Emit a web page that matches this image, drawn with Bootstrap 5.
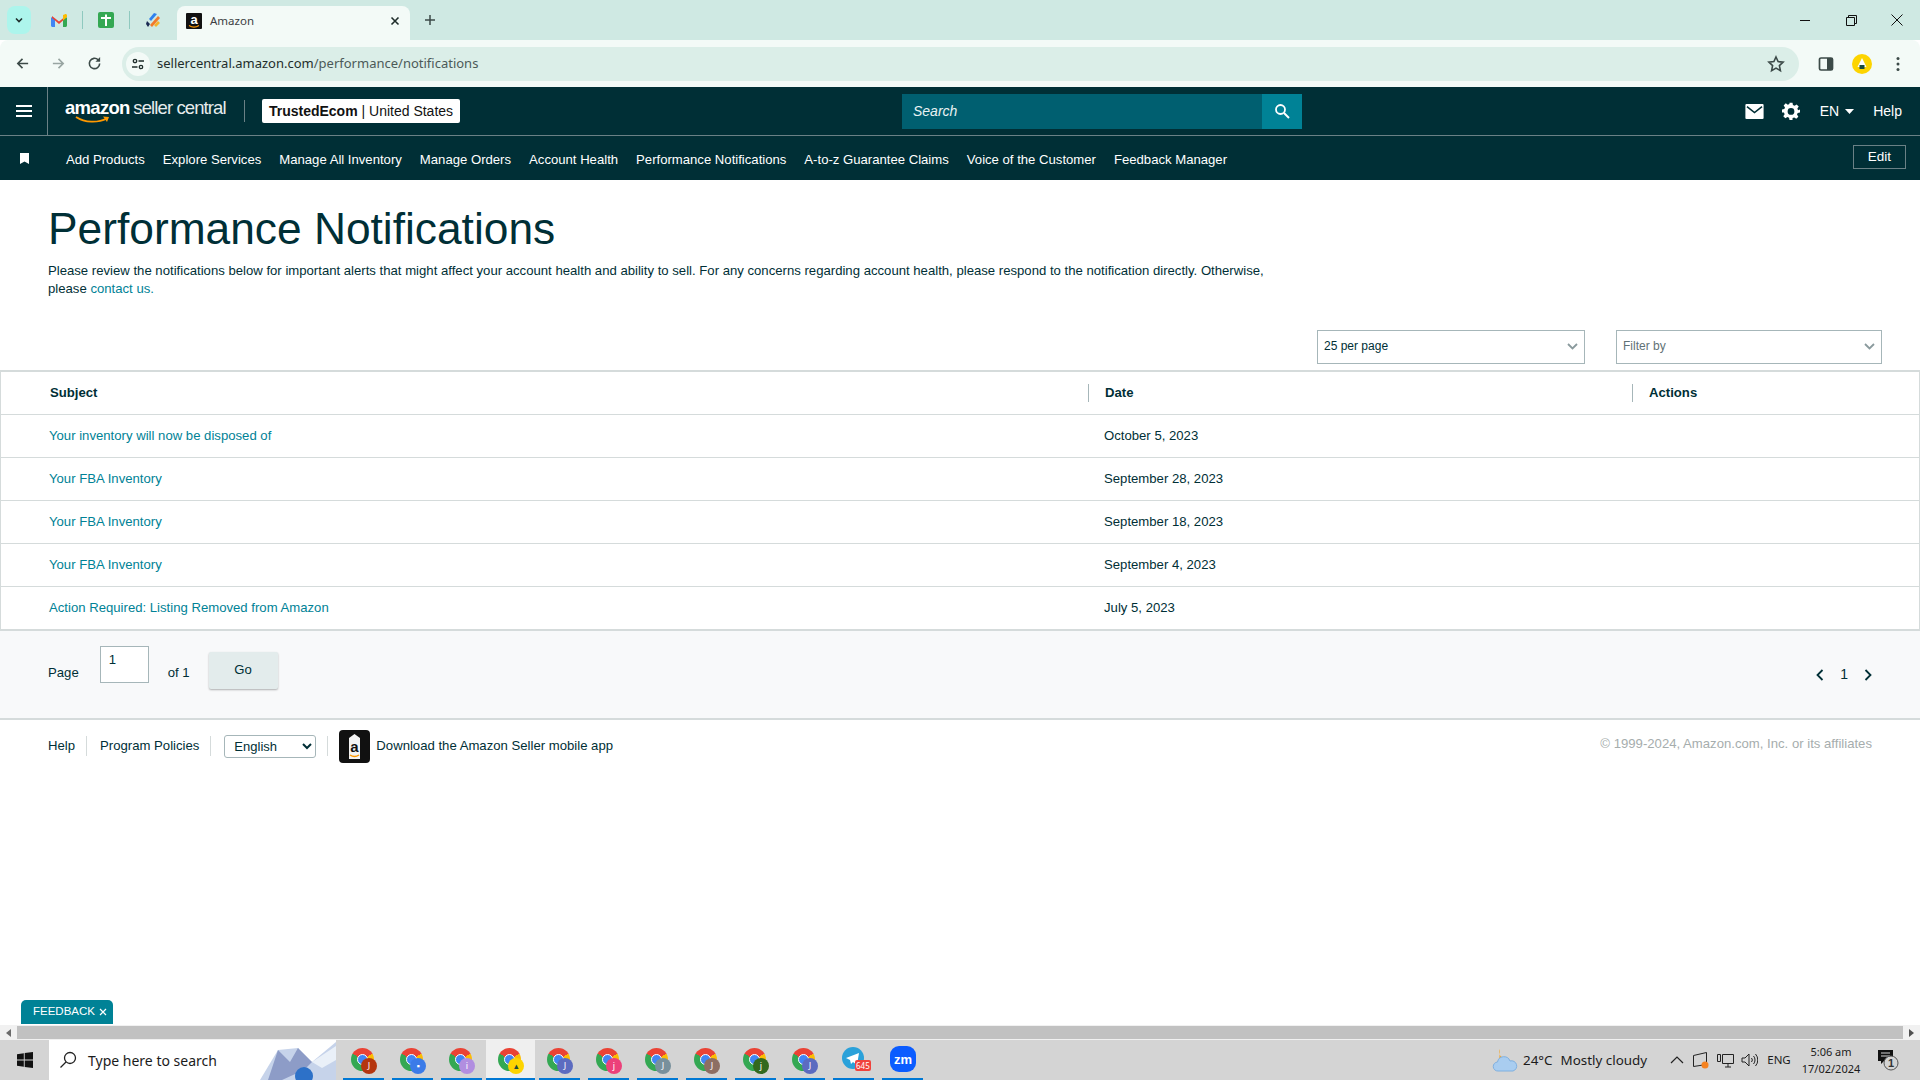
<!DOCTYPE html>
<html lang="en">
<head>
    <meta charset="UTF-8">
    <meta name="viewport" content="width=device-width, initial-scale=1.0">
    <title>Amazon</title>
    <link href="https://cdn.jsdelivr.net/npm/bootstrap@5.3.0/dist/css/bootstrap.min.css" rel="stylesheet">
    <style>
        :root {
            --ink: #002f36;
            --teal: #008296;
            --rule: #d5dbdb;
        }
        html, body { height: 100%; overflow: hidden; }
        body {
            width: 1920px;
            height: 1080px;
            font-family: "Liberation Sans", Arial, sans-serif;
            font-size: 13.15px;
            color: var(--ink);
            background: #fff;
        }
        .ui-font { font-family: "Noto Sans", "Open Sans", sans-serif; }

        /* browser chrome */
        .tab-strip { height: 40px; background: #cfe9e3; }
        .tab-search { width: 24px; height: 28px; margin: 6px 5px 0 7px; background: #adf5ec; border-radius: 8px; }
        .pinned { width: 46px; height: 40px; }
        .pin-sep { width: 1px; height: 18px; background: #8fc9bf; }
        .tab-active { width: 233px; height: 34px; margin: 6px 0 0 1px; padding: 0 10px 4px 9px; background: #f3faf7; border-radius: 8px 8px 0 0; font-size: 11.5px; color: #3c4043; }
        .tab-new { width: 40px; height: 40px; }
        .win-btn { width: 46px; height: 40px; }
        .toolbar { height: 47px; background: #f3faf7; border-radius: 8px 8px 0 0; }
        .nav-btn { width: 36px; }
        .omni { width: 1677px; height: 34px; margin-left: 10px; background: #dbeee8; border-radius: 17px; font-size: 13px; color: #1f2d2b; }
        .site-ico { width: 24px; height: 24px; margin: 0 7px 0 4px; border-radius: 50%; background: #f3faf7; }
        .url-dim { color: #4c5a58; }
        .star-ico { margin-right: 14px; }
        .tool-ico { width: 36px; }
        .tool-first { margin-left: 9px; }

        /* seller central header */
        .sc-top { height: 49px; background: var(--ink); border-bottom: 1px solid #6a8186; color: #fff; }
        .burger { width: 48px; height: 48px; border-right: 1px solid #6a8186; }
        .logo-wrap { width: 196px; padding-left: 17px; }
        .logo-amz { font-size: 18.5px; font-weight: 700; letter-spacing: -0.7px; line-height: 20px; }
        .logo-sc { font-size: 18.5px; font-weight: 400; letter-spacing: -0.9px; line-height: 20px; color: #e6ecec; }
        .logo-smile { margin-left: 10px; margin-top: -4px; }
        .v-rule { width: 1px; height: 22px; background: #6a8186; }
        .acct-box { height: 24px; width: 198px; margin-left: 17px; background: #fff; color: #111; border-radius: 2px; font-size: 14px; }
        .search-box { width: 400px; height: 35px; margin-left: 442px; }
        .search-input { flex: 1; background: #005f70; color: #e9f2f3; font-style: italic; font-size: 14px; padding-left: 11px; }
        .search-btn { width: 40px; background: var(--teal); }
        .sc-right { margin-left: auto; padding-right: 18px; font-size: 14px; }
        .sc-sub { height: 44px; background: var(--ink); color: #fff; padding: 0 14px 0 0; }
        .mark-ico { width: 48px; }
        .sc-links { gap: 18px; margin-left: 18px; padding-top: 3px; font-size: 13.14px; }
        .sc-links a { color: #fff; text-decoration: none; white-space: nowrap; }
        .edit-btn { margin-left: auto; margin-top: -3px; width: 53px; height: 24px; padding: 0; border: 1px solid #6a8186; border-radius: 0; color: #fff; font-size: 13.5px; background: transparent; line-height: 20px; }
        .gap-mail { margin: 0 18px; }
        .gap-caret { margin: 0 19px 0 6px; }
        .en-label { margin-left: 2px; }

        /* content */
        .page-title { font-size: 44.3px; font-weight: 400; line-height: 52px; margin: 23px 0 0 48px; color: var(--ink); }
        .page-intro { width: 1240px; margin: 7px 0 0 48px; line-height: 18px; color: var(--ink); }
        .page-intro a, .notif-table a { color: var(--teal); text-decoration: none; }
        .filter-row { margin-top: 32px; padding-right: 38px; gap: 31px; }
        .fake-select { width: 268px; height: 34px; padding: 0 6px 2px; border: 1px solid #a6b6b9; font-size: 12px; }
        .fake-select.wide { width: 266px; }
        .fake-select.muted { color: #5f7276; }
        .notif-wrap { margin-top: 6px; border-top: 2px solid var(--rule); border-bottom: 2px solid var(--rule); border-right: 1px solid var(--rule); border-left: 1px solid var(--rule); }
        .notif-table { margin: 0; table-layout: fixed; width: 100%; --bs-table-color: var(--ink); }
        .notif-table td, .notif-table th { height: 43px; padding: 0; vertical-align: middle; border-color: var(--rule); }
        .notif-table th { height: 42px; font-weight: 700; }
        .notif-table tbody tr:last-child td { border-bottom: 0; }
        .notif-table td:first-child { padding-left: 48px; }
        .notif-table td:nth-child(2) { padding-left: 16px; }
        .notif-table th:first-child { padding-left: 49px; }
        .th-sep { display: block; height: 18px; line-height: 18px; padding-left: 16px; border-left: 1px solid #a6b6b9; }
        .pager-row { height: 89px; background: #f8f9fa; padding: 0 48px 4px; border-bottom: 2px solid var(--rule); }
        .page-input { width: 49px; height: 37px; margin: -16px 19px 0 21px; padding: 0 8px 8px; background: #fff; border: 1px solid #a6b6b9; line-height: 26px; }
        .go-btn { width: 69px; height: 37px; margin-left: 19px; margin-top: -5px; padding: 0; border: 0; border-radius: 2px; background: #e3ecec; box-shadow: 0 1px 2px rgba(0,0,0,.3); color: var(--ink); font-size: 13.15px; }
        .pager-nums { margin-left: auto; gap: 16px; font-size: 14px; padding-top: 4px; }
        .foot-row { height: 52px; padding: 0 48px; }
        .foot-sep { width: 1px; height: 20px; background: var(--rule); }
        .foot-gap-a { margin: 0 13px 0 11px; }
        .foot-gap-b { margin: 0 11px; }
        .lang-select { width: 92px; height: 23px; padding: 0 0 0 5px; font-size: 13px; border: 1px solid #a6b6b9; border-radius: 3px; background: #fff; color: var(--ink); font-family: inherit; }
        .app-ico { margin-right: 6px; }
        .copyright { margin-left: auto; margin-top: -5px; color: #a6adad; }
        .feedback-tab { width: 92px; height: 24px; margin: auto 0 1px 21px; padding: 0 0 0 12px; background: var(--teal); color: #fff; font-size: 11.5px; border-radius: 5px 5px 0 0; }

        /* scrollbar + taskbar */
        .hscroll { height: 15px; background: #f1f1f1; }
        .hscroll-arrow { width: 17px; }
        .hscroll-thumb { flex: 1; height: 13px; background: #c1c1c1; }
        .taskbar { height: 40px; background: #d4d4d4; font-size: 14px; color: #1b1b1b; }
        .start-btn { width: 49px; }
        .task-search { width: 287px; height: 40px; margin-right: 3px; background: #fff; padding-left: 10px; overflow: hidden; }
        .search-glass { margin-right: 11px; }
        .task-app { width: 49px; height: 40px; padding: 0 4px; }
        .task-app.is-open { background: #efefef; padding: 0; }
        .task-line { width: 100%; height: 40px; border-bottom: 2px solid #0078d4; position: relative; }
        .chrome-dot { width: 23px; height: 23px; margin-left: -3px; border-radius: 50%; background: conic-gradient(from -60deg, #ea4335 0 120deg, #fbbc04 120deg 240deg, #34a853 240deg 360deg); position: relative; }
        .chrome-dot::after { content: ""; position: absolute; left: 6px; top: 6px; width: 11px; height: 11px; border-radius: 50%; background: #4285f4; border: 1.5px solid #fff; }
        .chrome-badge { position: absolute; left: 18px; top: 18px; width: 16px; height: 16px; border-radius: 50%; color: #fff; font-size: 9px; line-height: 16px; text-align: center; }
        .is-open .chrome-badge { left: 22px; background: #fdd400; color: #1c4a3e; }
        .tele-badge { position: absolute; left: 22px; top: 20px; padding: 0 1px; background: #f0433d; color: #fff; font-size: 8px; line-height: 11px; border-radius: 2px; }
        .tray { margin-left: auto; margin-right: 9px; }
        .tray-weather { width: 174px; font-size: 13.4px; }
        .tray-ico { width: 24px; }
        .tray-lang { width: 36px; font-size: 11.5px; text-align: center; }
        .tray-clock { width: 68px; font-size: 11px; line-height: 17px; text-align: center; }
        .tray-msg { width: 46px; }
    </style>
</head>
<body class="d-flex flex-column">

    <!-- browser tabs -->
    <div class="tab-strip d-flex ui-font">
        <div class="tab-search d-flex align-items-center justify-content-center">
            <svg width="10" height="10" viewBox="0 0 10 10"><path d="M2 3.500l3 3 3-3" fill="none" stroke="#1f2d2b" stroke-width="1.600"/></svg>
        </div>
        <div class="pinned d-flex align-items-center justify-content-center">
            <svg width="16" height="13" viewBox="0 0 16 13"><path d="M1 13V2l7 5.500L15 2v11h-3V6.500L8 10 4 6.500V13z" fill="#ea4335"/><path d="M0 3v8.500C0 12.300.7 13 1.500 13H4V6.500z" fill="#4285f4"/><path d="M16 3v8.500c0 .8-.7 1.500-1.500 1.500H12V6.500z" fill="#34a853"/><path d="M12 6.500V1l2-.8c.9-.3 2 .3 2 1.400V3z" fill="#fbbc04"/></svg>
        </div>
        <div class="pin-sep align-self-center"></div>
        <div class="pinned d-flex align-items-center justify-content-center">
            <svg width="16" height="16" viewBox="0 0 16 16"><rect width="16" height="16" rx="2" fill="#34a853"/><path d="M3 5h4V2.500h2V5h4v2H9v7H7V7H3z" fill="#fff"/></svg>
        </div>
        <div class="pin-sep align-self-center"></div>
        <div class="pinned d-flex align-items-center justify-content-center">
            <svg width="16" height="18" viewBox="0 0 16 18"><path d="M9 2l3 1-6 7-2-2z" fill="#2f80ed"/><path d="M13 5l2 2-8 9-2-2z" fill="#f2792b"/><path d="M13 10l2 2-4 4-2-2z" fill="#f7b32b"/><path d="M2 10l3 3-2 3-2-3z" fill="#1b2a52"/></svg>
        </div>
        <div class="tab-active d-flex align-items-center">
            <svg class="flex-shrink-0" width="16" height="16" viewBox="0 0 16 16"><rect width="16" height="16" rx="1" fill="#111"/><path d="M3 12.500c3 2 7 2 10 0" fill="none" stroke="#f90" stroke-width="1.200"/><text x="8" y="10.500" fill="#fff" font-size="13" font-weight="700" font-family="Liberation Sans" text-anchor="middle">a</text></svg>
            <span class="ms-2">Amazon</span>
            <svg class="ms-auto" width="10" height="10" viewBox="0 0 10 10"><path d="M1.500 1.500l7 7m0-7l-7 7" stroke="#1f2d2b" stroke-width="1.600"/></svg>
        </div>
        <div class="tab-new d-flex align-items-center justify-content-center">
            <svg width="12" height="12" viewBox="0 0 12 12"><path d="M6 1v10M1 6h10" stroke="#3c4a48" stroke-width="1.500"/></svg>
        </div>
        <div class="ms-auto d-flex">
            <div class="win-btn d-flex align-items-center justify-content-center"><svg width="10" height="10" viewBox="0 0 10 10"><path d="M0 5.500h10" stroke="#111"/></svg></div>
            <div class="win-btn d-flex align-items-center justify-content-center"><svg width="11" height="11" viewBox="0 0 11 11"><path d="M.5 2.500h8v8h-8zM2.500 2.500v-2h8v8h-2" fill="none" stroke="#111"/></svg></div>
            <div class="win-btn d-flex align-items-center justify-content-center"><svg width="12" height="12" viewBox="0 0 12 12"><path d="M.5.5l11 11m0-11l-11 11" stroke="#111"/></svg></div>
        </div>
    </div>

    <!-- address bar -->
    <div class="toolbar d-flex align-items-center ui-font">
        <div class="nav-btn d-flex justify-content-center ms-1"><svg width="15" height="15" viewBox="0 0 16 16"><path d="M14 8H3M8 3L3 8l5 5" fill="none" stroke="#3c4a48" stroke-width="1.700"/></svg></div>
        <div class="nav-btn d-flex justify-content-center"><svg width="15" height="15" viewBox="0 0 16 16"><path d="M2 8h11M8 3l5 5-5 5" fill="none" stroke="#98a5a2" stroke-width="1.700"/></svg></div>
        <div class="nav-btn d-flex justify-content-center"><svg width="15" height="15" viewBox="0 0 16 16"><path d="M13.500 8a5.500 5.500 0 1 1-1.600-3.900" fill="none" stroke="#3c4a48" stroke-width="1.700"/><path d="M14 1v5H9z" fill="#3c4a48"/></svg></div>
        <div class="omni d-flex align-items-center">
            <div class="site-ico d-flex align-items-center justify-content-center">
                <svg width="14" height="14" viewBox="0 0 14 14"><circle cx="4" cy="4" r="1.700" fill="none" stroke="#1f2d2b" stroke-width="1.300"/><path d="M7.500 4H13M1 10h5.500" stroke="#1f2d2b" stroke-width="1.300"/><circle cx="10" cy="10" r="1.700" fill="none" stroke="#1f2d2b" stroke-width="1.300"/></svg>
            </div>
            <span>sellercentral.amazon.com<span class="url-dim">/performance/notifications</span></span>
            <svg class="ms-auto star-ico" width="18" height="18" viewBox="0 0 18 18"><path d="M9 2l2.100 4.600 5 .6-3.700 3.400 1 5L9 13.100l-4.400 2.500 1-5L1.900 7.200l5-.6z" fill="none" stroke="#3c4a48" stroke-width="1.600"/></svg>
        </div>
        <div class="tool-ico tool-first d-flex justify-content-center"><svg width="16" height="16" viewBox="0 0 16 16"><rect x="1.500" y="2" width="13" height="12" rx="1.500" fill="none" stroke="#3c4a48" stroke-width="1.700"/><rect x="9" y="2" width="5.500" height="12" fill="#3c4a48"/></svg></div>
        <div class="tool-ico d-flex justify-content-center"><svg width="20" height="20" viewBox="0 0 20 20"><circle cx="10" cy="10" r="10" fill="#fdd400"/><path d="M10 4l4.500 9H5.500z" fill="#fff"/><rect x="7.500" y="11" width="5" height="4" fill="#1c4a3e"/></svg></div>
        <div class="tool-ico d-flex justify-content-center"><svg width="4" height="16" viewBox="0 0 4 16"><circle cx="2" cy="2.500" r="1.500" fill="#3c4a48"/><circle cx="2" cy="8" r="1.500" fill="#3c4a48"/><circle cx="2" cy="13.500" r="1.500" fill="#3c4a48"/></svg></div>
    </div>

    <!-- seller central nav -->
    <div class="sc-top d-flex align-items-center">
        <div class="burger d-flex align-items-center justify-content-center">
            <svg width="16" height="12" viewBox="0 0 16 12"><path d="M0 1h16M0 6h16M0 11h16" stroke="#fff" stroke-width="2"/></svg>
        </div>
        <div class="logo-wrap d-flex flex-column">
            <div class="text-nowrap"><span class="logo-amz">amazon</span> <span class="logo-sc">seller central</span></div>
            <svg class="logo-smile" width="36" height="8" viewBox="0 0 36 8"><path d="M1 1c9 6 22 6 31 1.500" fill="none" stroke="#f90" stroke-width="1.800"/><path d="M28 .5l6 .5-2 5z" fill="#f90"/></svg>
        </div>
        <div class="v-rule"></div>
        <div class="acct-box d-flex align-items-center justify-content-center"><strong>TrustedEcom</strong>&nbsp;| United States</div>
        <div class="search-box d-flex">
            <div class="search-input d-flex align-items-center">Search</div>
            <div class="search-btn d-flex align-items-center justify-content-center">
                <svg width="16" height="16" viewBox="0 0 16 16"><circle cx="6.500" cy="6.500" r="4.500" fill="none" stroke="#fff" stroke-width="1.800"/><path d="M10 10l5 5" stroke="#fff" stroke-width="2"/></svg>
            </div>
        </div>
        <div class="sc-right d-flex align-items-center">
            <svg width="19" height="15" viewBox="0 0 17 14"><rect width="17" height="14" rx="1" fill="#fff"/><path d="M1.500 2.500L8.500 8l7-5.500" fill="none" stroke="#002f36" stroke-width="1.500"/></svg>
            <svg class="gap-mail" width="18" height="18" viewBox="0 0 24 24"><path fill="#fff" fill-rule="evenodd" d="M10 1h4l.6 3.100 2.200.9 2.700-1.800 2.800 2.800-1.800 2.700.9 2.200L24 10v4l-3.100.6-.9 2.200 1.800 2.700-2.800 2.800-2.700-1.800-2.200.9L14 24h-4l-.6-3.100-2.200-.9-2.700 1.800-2.800-2.800 1.800-2.700-.9-2.200L0 14v-4l3.100-.6.900-2.200L2.200 4.500 5 1.700l2.700 1.800 2.200-.9zM12 8a4.500 4.500 0 1 0 0 9 4.500 4.500 0 0 0 0-9z"/></svg>
            <span class="en-label">EN</span>
            <svg class="gap-caret" width="9" height="5" viewBox="0 0 9 5"><path d="M0 0h9L4.500 5z" fill="#fff"/></svg>
            <span>Help</span>
        </div>
    </div>
    <div class="sc-sub d-flex align-items-center">
        <div class="mark-ico d-flex justify-content-center">
            <svg width="9" height="11" viewBox="0 0 9 11"><path d="M0 0h9v11L4.500 8.500 0 11z" fill="#fff"/></svg>
        </div>
        <nav class="sc-links d-flex">
            <a href="#">Add Products</a>
            <a href="#">Explore Services</a>
            <a href="#">Manage All Inventory</a>
            <a href="#">Manage Orders</a>
            <a href="#">Account Health</a>
            <a href="#">Performance Notifications</a>
            <a href="#">A-to-z Guarantee Claims</a>
            <a href="#">Voice of the Customer</a>
            <a href="#">Feedback Manager</a>
        </nav>
        <button class="btn edit-btn" type="button">Edit</button>
    </div>

    <!-- page body -->
    <main class="flex-grow-1 d-flex flex-column">
        <h1 class="page-title">Performance Notifications</h1>
        <p class="page-intro mb-0">Please review the notifications below for important alerts that might affect your account health and ability to sell. For any concerns regarding account health, please respond to the notification directly. Otherwise, please <a href="#">contact us.</a></p>

        <div class="filter-row d-flex justify-content-end">
            <div class="fake-select d-flex align-items-center justify-content-between">
                <span>25 per page</span>
                <svg width="11" height="7" viewBox="0 0 11 7"><path d="M1 1l4.500 4.500L10 1" fill="none" stroke="#8a9a9d" stroke-width="1.800"/></svg>
            </div>
            <div class="fake-select wide muted d-flex align-items-center justify-content-between">
                <span>Filter by</span>
                <svg width="11" height="7" viewBox="0 0 11 7"><path d="M1 1l4.500 4.500L10 1" fill="none" stroke="#8a9a9d" stroke-width="1.800"/></svg>
            </div>
        </div>

        <div class="notif-wrap">
            <table class="table notif-table">
                <colgroup>
                    <col style="width:1087px">
                    <col style="width:544px">
                    <col>
                </colgroup>
                <thead>
                    <tr>
                        <th>Subject</th>
                        <th><span class="th-sep">Date</span></th>
                        <th><span class="th-sep">Actions</span></th>
                    </tr>
                </thead>
                <tbody>
                    <tr><td><a href="#">Your inventory will now be disposed of</a></td><td>October 5, 2023</td><td></td></tr>
                    <tr><td><a href="#">Your FBA Inventory</a></td><td>September 28, 2023</td><td></td></tr>
                    <tr><td><a href="#">Your FBA Inventory</a></td><td>September 18, 2023</td><td></td></tr>
                    <tr><td><a href="#">Your FBA Inventory</a></td><td>September 4, 2023</td><td></td></tr>
                    <tr><td><a href="#">Action Required: Listing Removed from Amazon</a></td><td>July 5, 2023</td><td></td></tr>
                </tbody>
            </table>
        </div>

        <div class="pager-row d-flex align-items-center">
            <span>Page</span>
            <div class="page-input">1</div>
            <span>of 1</span>
            <button class="btn go-btn" type="button">Go</button>
            <div class="pager-nums d-flex align-items-center">
                <svg width="8" height="12" viewBox="0 0 8 12"><path d="M6.500 1L1.500 6l5 5" fill="none" stroke="#002f36" stroke-width="1.800"/></svg>
                <span>1</span>
                <svg width="8" height="12" viewBox="0 0 8 12"><path d="M1.500 1l5 5-5 5" fill="none" stroke="#002f36" stroke-width="1.800"/></svg>
            </div>
        </div>

        <div class="foot-row d-flex align-items-center">
            <span>Help</span>
            <div class="foot-sep foot-gap-a"></div>
            <span>Program Policies</span>
            <div class="foot-sep foot-gap-a"></div>
            <select class="lang-select"><option>English</option></select>
            <div class="foot-sep foot-gap-b"></div>
            <svg class="app-ico" width="31" height="33" viewBox="0 0 31 33"><rect width="31" height="33" rx="4" fill="#111"/><path d="M10 8l5.500-4 5.500 4v21H10z" fill="#f4f4f4"/><text x="15.500" y="22" fill="#111" font-size="15" font-weight="700" font-family="Liberation Sans" text-anchor="middle">a</text><path d="M11 25c3 2 6 2 9 0" fill="none" stroke="#f90" stroke-width="1.500"/></svg>
            <span>Download the Amazon Seller mobile app</span>
            <span class="copyright">© 1999-2024, Amazon.com, Inc. or its affiliates</span>
        </div>

        <div class="feedback-tab d-flex align-items-center gap-1">
            <span>FEEDBACK</span>
            <svg width="8" height="8" viewBox="0 0 8 8"><path d="M1 1l6 6m0-6L1 7" stroke="#fff" stroke-width="1.200"/></svg>
        </div>
    </main>

    <div class="hscroll d-flex align-items-center">
        <div class="hscroll-arrow d-flex justify-content-center"><svg width="5" height="8" viewBox="0 0 5 8"><path d="M5 0v8L0 4z" fill="#6b6b6b"/></svg></div>
        <div class="hscroll-thumb"></div>
        <div class="hscroll-arrow d-flex justify-content-center"><svg width="5" height="8" viewBox="0 0 5 8"><path d="M0 0v8l5-4z" fill="#505050"/></svg></div>
    </div>

    <!-- windows taskbar -->
    <div class="taskbar d-flex ui-font">
        <div class="start-btn d-flex align-items-center justify-content-center">
            <svg width="16" height="16" viewBox="0 0 16 16"><path d="M0 2.200L6.800 1.200v6.400H0zM7.700 1.100L16 0v7.600H7.700zM0 8.400h6.800v6.400L0 13.800zM7.700 8.400H16V16l-8.300-1.100z" fill="#111"/></svg>
        </div>
        <div class="task-search d-flex align-items-center">
            <svg class="flex-shrink-0 search-glass" width="18" height="18" viewBox="0 0 18 18"><circle cx="11" cy="7" r="5.500" fill="none" stroke="#222" stroke-width="1.300"/><path d="M7 11l-5.500 5.500" stroke="#222" stroke-width="1.300"/></svg>
            <span class="text-nowrap">Type here to search</span>
            <svg class="ms-auto flex-shrink-0" width="76" height="40" viewBox="0 0 76 40"><path d="M0 40L18 10l20-2 14 14 24-20v38z" fill="#c6d3ea"/><path d="M18 10l12 12 8-14 14 14-8 8-22 10H8z" fill="#8d9cc7"/><path d="M52 22l24-16v14l-14 8z" fill="#eaf0f8"/><circle cx="44" cy="36" r="9" fill="#2d71c8"/></svg>
        </div>

        <div class="task-app"><div class="task-line d-flex align-items-center justify-content-center"><div class="chrome-dot"></div><span class="chrome-badge" style="background:#b5360f">J</span></div></div>
        <div class="task-app"><div class="task-line d-flex align-items-center justify-content-center"><div class="chrome-dot"></div><span class="chrome-badge" style="background:#3b7be8">▪</span></div></div>
        <div class="task-app"><div class="task-line d-flex align-items-center justify-content-center"><div class="chrome-dot"></div><span class="chrome-badge" style="background:#b18ee0">i</span></div></div>
        <div class="task-app is-open"><div class="task-line d-flex align-items-center justify-content-center"><div class="chrome-dot"></div><span class="chrome-badge">▴</span></div></div>
        <div class="task-app"><div class="task-line d-flex align-items-center justify-content-center"><div class="chrome-dot"></div><span class="chrome-badge" style="background:#5c6bc0">J</span></div></div>
        <div class="task-app"><div class="task-line d-flex align-items-center justify-content-center"><div class="chrome-dot"></div><span class="chrome-badge" style="background:#ec407a">j</span></div></div>
        <div class="task-app"><div class="task-line d-flex align-items-center justify-content-center"><div class="chrome-dot"></div><span class="chrome-badge" style="background:#78909c">J</span></div></div>
        <div class="task-app"><div class="task-line d-flex align-items-center justify-content-center"><div class="chrome-dot"></div><span class="chrome-badge" style="background:#8d6e63">J</span></div></div>
        <div class="task-app"><div class="task-line d-flex align-items-center justify-content-center"><div class="chrome-dot"></div><span class="chrome-badge" style="background:#33691e">j</span></div></div>
        <div class="task-app"><div class="task-line d-flex align-items-center justify-content-center"><div class="chrome-dot"></div><span class="chrome-badge" style="background:#5c6bc0">J</span></div></div>
        <div class="task-app"><div class="task-line d-flex align-items-center justify-content-center">
            <svg width="24" height="24" viewBox="0 0 24 24"><circle cx="11" cy="11" r="11" fill="#2aa1da"/><path d="M4 11l13-5-2 12-4-3-2 2-1-4z" fill="#fff"/></svg>
            <span class="tele-badge">645</span>
        </div></div>
        <div class="task-app"><div class="task-line d-flex align-items-center justify-content-center">
            <svg width="26" height="26" viewBox="0 0 26 26"><rect width="26" height="26" rx="9" fill="#0b5cff"/><text x="13" y="17.500" fill="#fff" font-size="13" font-weight="700" font-family="Liberation Sans" text-anchor="middle">zm</text></svg>
        </div></div>

        <div class="tray d-flex align-items-center">
            <div class="tray-weather d-flex align-items-center">
                <svg class="me-1" width="28" height="26" viewBox="0 0 28 26"><path d="M9 2a6 6 0 0 0 6 9l-7 3z" fill="#f0a93a"/><path d="M7 24a4.500 4.500 0 0 1-.5-9 6.500 6.500 0 0 1 12.500-1 5 5 0 0 1 3 10z" fill="#a9cdf0" stroke="#7fb0e0"/></svg>
                <span>24°C</span><span class="ms-2">Mostly cloudy</span>
            </div>
            <div class="tray-ico d-flex justify-content-center"><svg width="14" height="8" viewBox="0 0 14 8"><path d="M1 7l6-6 6 6" fill="none" stroke="#222" stroke-width="1.200"/></svg></div>
            <div class="tray-ico d-flex justify-content-center"><svg width="18" height="17" viewBox="0 0 18 17"><path d="M1.500 3.500l13-3v12l-13 2z" fill="none" stroke="#222"/><circle cx="13" cy="13" r="3.500" fill="#f58220"/></svg></div>
            <div class="tray-ico d-flex justify-content-center"><svg width="17" height="15" viewBox="0 0 17 15"><path d="M5.500 1.500h11v9h-11zM.5 1.500h3v7h-3zM8 14h6M11 10.500V14" fill="none" stroke="#222"/></svg></div>
            <div class="tray-ico d-flex justify-content-center"><svg width="17" height="14" viewBox="0 0 17 14"><path d="M1 5h3l4-4v12L4 9H1zM10.500 5a3 3 0 0 1 0 4M12.500 3a6 6 0 0 1 0 8M14.500 1a9 9 0 0 1 0 12" fill="none" stroke="#222"/></svg></div>
            <div class="tray-lang">ENG</div>
            <div class="tray-clock"><div>5:06 am</div><div>17/02/2024</div></div>
            <div class="tray-msg d-flex justify-content-center">
                <svg width="24" height="24" viewBox="0 0 24 24"><path d="M2 2h15v11H8l-3 3v-3H2z" fill="#111"/><path d="M5 5h9M5 8h9" stroke="#d4d4d4"/><circle cx="15" cy="15" r="7" fill="#d4d4d4" stroke="#555"/><text x="15" y="19" font-size="11" font-weight="700" fill="#333" font-family="Liberation Sans" text-anchor="middle">1</text></svg>
            </div>
        </div>
    </div>

</body>
</html>
